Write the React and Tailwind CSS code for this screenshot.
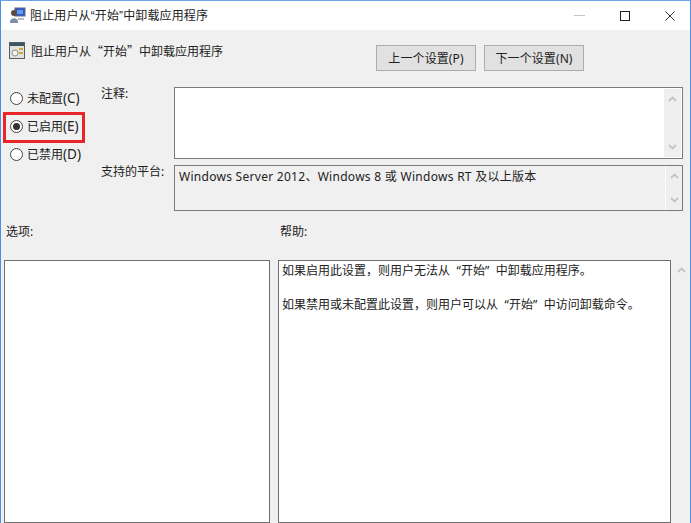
const cjk = "font-['Noto_Sans_CJK_SC','Noto_Sans',sans-serif]";
const latin = "font-['Noto_Sans','Noto_Sans_CJK_SC',sans-serif]";

function Chevron({ up, className = "" }) {
  return (
    <svg width="9" height="6" viewBox="0 0 9 6" className={className}>
      <path d={up ? "M1 5L4.5 1.5L8 5" : "M1 1L4.5 4.5L8 1"} fill="none" stroke="#c4c4c4" strokeWidth="1.8" />
    </svg>
  );
}

function Scrollbar({ className = "" }) {
  return (
    <div className={`flex w-[17px] shrink-0 flex-col items-center justify-between bg-[#efefef] py-[7px] ${className}`}>
      <Chevron up />
      <Chevron />
    </div>
  );
}

function Radio({ label, suffix, checked }) {
  return (
    <div className="flex h-[28px] items-center gap-[4px]">
      <span className="flex h-[13px] w-[13px] items-center justify-center rounded-full border border-[#444] bg-white">
        {checked && <span className="h-[7px] w-[7px] rounded-full bg-[#333]" />}
      </span>
      <span className="text-[12px] leading-[16px] text-[#222]">
        {label}
        <span className="text-[13.5px]">{suffix}</span>
      </span>
    </div>
  );
}

function WinButton({ children }) {
  return (
    <div className="flex h-[26px] w-[100px] items-center justify-center border border-[#adadad] bg-[#e1e1e1] pt-px text-[12px] tracking-[0.1px] text-[#222]">
      {children}
    </div>
  );
}

export default function App() {
  return (
    <div className={`flex h-[523px] w-[691px] flex-col overflow-hidden border-x border-t border-x-[#4a90e2] border-t-[#6aa5e8] bg-[#f0f0f0] ${latin}`}>
      <div className="flex h-[29px] shrink-0 items-center justify-between bg-white pl-[8px] pr-[15px]">
        <div className="flex items-center gap-[4px]">
          <svg width="17" height="17" viewBox="0 0 17 17">
            <rect x="6" y="1" width="10" height="8" fill="#2f55c8" stroke="#5a6a80" />
            <rect x="8" y="3" width="6" height="4" fill="#5f9bf0" />
            <circle cx="5" cy="6" r="3" fill="#5a4a40" />
            <path d="M1 15C1 10 9 10 9 15V16H1Z" fill="#7d8fa5" />
            <rect x="9" y="11" width="6" height="2" fill="#b9bfc6" />
          </svg>
          <span className="text-[12px] leading-[16px] tracking-[0.13px] text-[#222] font-['Liberation_Sans','Noto_Sans_CJK_SC',sans-serif]">阻止用户从“开始”中卸载应用程序</span>
        </div>
        <div className="flex items-center gap-[35px]">
          <span className="h-px w-[11px] bg-[#c4c4c4]" />
          <span className="h-[10px] w-[10px] border border-[#222]" />
          <svg width="10" height="10" viewBox="0 0 10 10">
            <path d="M0.5 0.5L9.5 9.5M9.5 0.5L0.5 9.5" stroke="#333" strokeWidth="1" />
          </svg>
        </div>
      </div>

      <div className="flex h-[41px] shrink-0 items-start justify-between pl-[8px] pr-[106px]">
        <div className="mt-[12px] flex items-center gap-[6px]">
          <svg width="16" height="17" viewBox="0 0 16 17">
            <rect x="0.5" y="0.5" width="15" height="16" fill="#dfe3da" stroke="#4f6068" />
            <rect x="1" y="1" width="14" height="3" fill="#3f5560" />
            <circle cx="6" cy="11" r="3" fill="#f5f5f0" stroke="#8a9090" />
            <rect x="10" y="6" width="4" height="2" fill="#d6a83a" />
            <rect x="10" y="10" width="4" height="2" fill="#d6a83a" />
          </svg>
          <span className={`text-[12px] leading-[16px] text-[#222] ${cjk}`}>阻止用户从“开始”中卸载应用程序</span>
        </div>
        <div className="mt-[15px] flex gap-[8px]">
          <WinButton>上一个设置(P)</WinButton>
          <WinButton>下一个设置(N)</WinButton>
        </div>
      </div>

      <div className="flex shrink-0 pl-[8px] pr-[7px] pt-[16px]">
        <div className="mt-[-3px] w-[92px] shrink-0 pl-px">
          <Radio label="未配置" suffix="(C)" />
          <Radio label="已启用" suffix="(E)" checked />
          <Radio label="已禁用" suffix="(D)" />
        </div>
        <div className="flex flex-1 flex-col gap-[6px]">
          <div className="flex">
            <span className="w-[73px] shrink-0 text-[12px] leading-[14px] text-[#222]">注释:</span>
            <div className="flex h-[72px] flex-1 border border-[#7a7a7a] bg-white py-px pr-px">
              <div className="flex-1" />
              <Scrollbar />
            </div>
          </div>
          <div className="flex">
            <span className="w-[73px] shrink-0 text-[12px] leading-[14px] text-[#222]">支持的平台:</span>
            <div className="flex h-[46px] flex-1 border border-[#7a7a7a] bg-[#f0f0f0]">
              <div className="flex-1 pl-[4px] pt-[3px] text-[12px] leading-[16px] tracking-[0.28px] text-[#222]">Windows Server 2012、Windows 8 或 Windows RT 及以上版本</div>
              <Scrollbar className="border-l border-white" />
            </div>
          </div>
        </div>
      </div>

      <div className="flex h-[49px] shrink-0 pl-[5px] pt-[13px] text-[12px] leading-[16px] text-[#222]">
        <span className="w-[274px]">选项:</span>
        <span>帮助:</span>
      </div>

      <div className="flex min-h-0 flex-1 pl-[3px]">
        <div className="w-[266px] border border-[#6e6e6e] bg-white" />
        <div className="ml-[8px] w-[393px] border border-[#6e6e6e] bg-white pl-[3px] pr-[4px] pt-px text-[12px] leading-[17px] text-[#222] [word-spacing:3.5px]">
          <p>如果启用此设置，则用户无法从 “开始” 中卸载应用程序。</p>
          <p className="mt-[17px]">如果禁用或未配置此设置，则用户可以从 “开始” 中访问卸载命令。</p>
        </div>
        <div className="flex flex-1 justify-center pl-px pt-[7px]">
          <Chevron up />
        </div>
      </div>

      <div className="pointer-events-none absolute left-[3px] top-[112px] h-[31px] w-[82px] border-[3px] border-[#e8262a]" />
    </div>
  );
}
